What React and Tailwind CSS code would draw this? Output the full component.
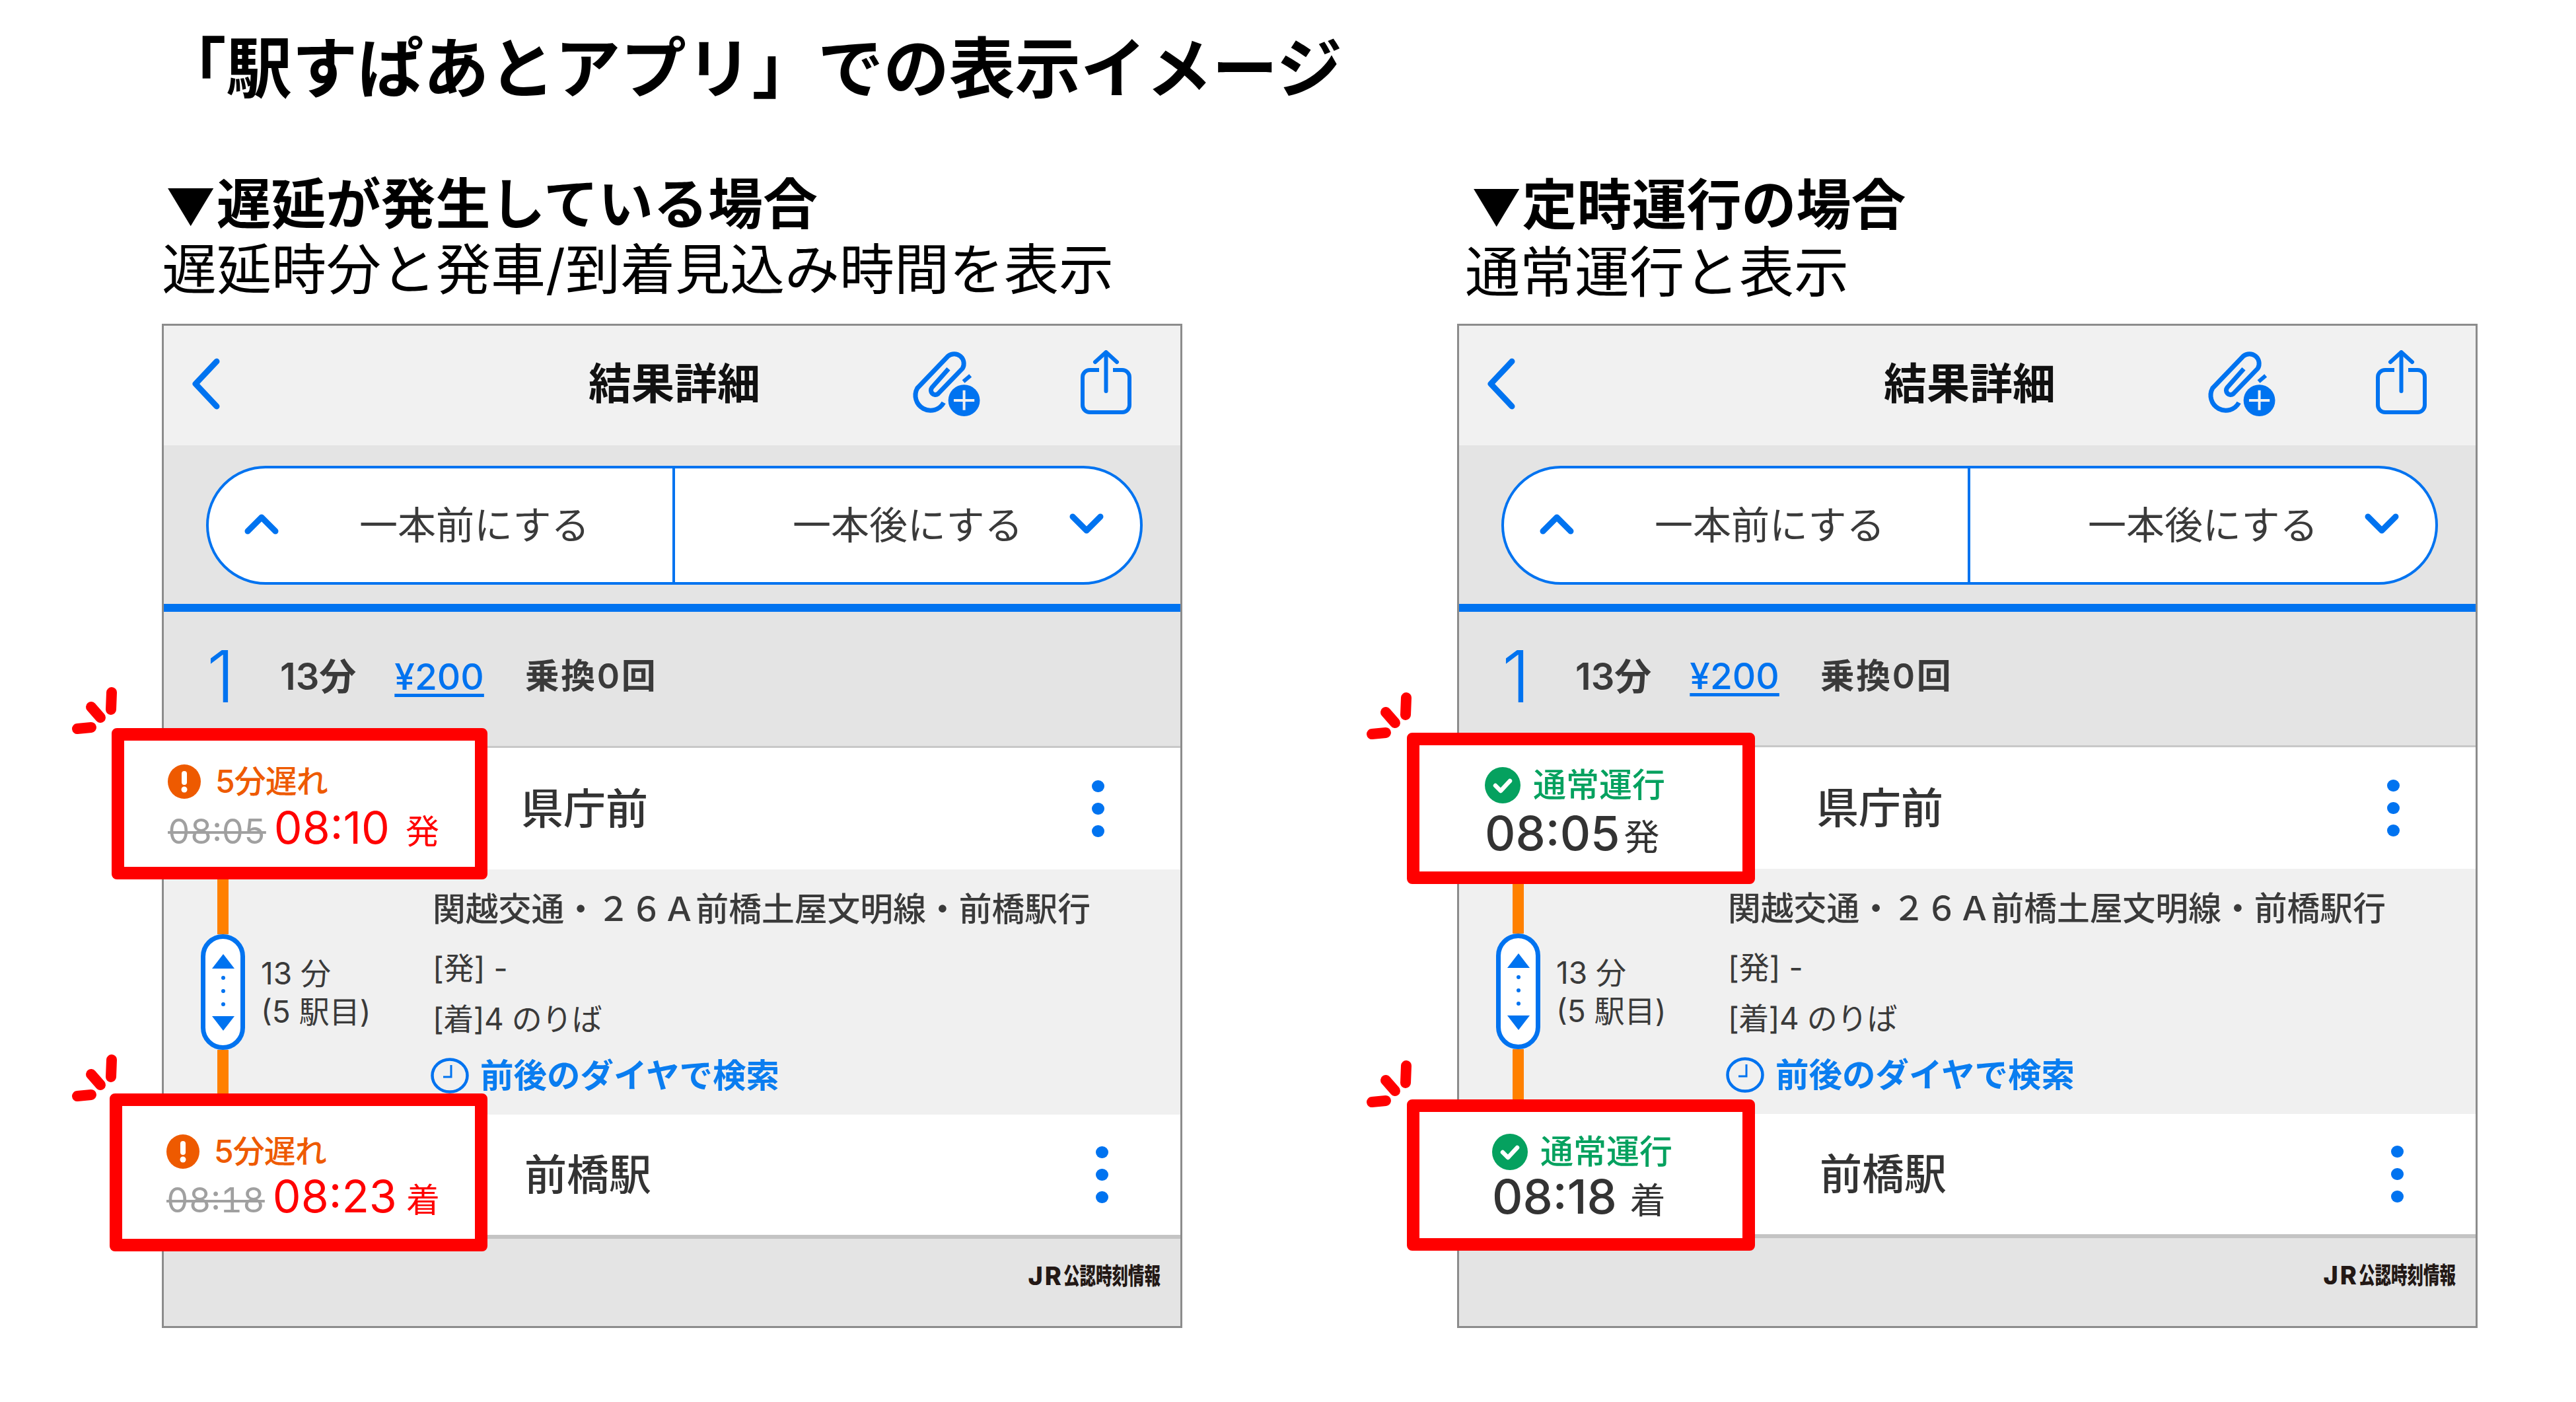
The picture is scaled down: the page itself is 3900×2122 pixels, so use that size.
import React from 'react';

const BLUE = '#0073f0';

const Burst = ({ className }) => (
  <svg className={className} width="75" height="72" viewBox="0 0 75 72" fill="none" stroke="#ff0000" strokeWidth="16" strokeLinecap="round">
    <path d="M12 63 L33 61" />
    <path d="M33 30 L47 46" />
    <path d="M64 8 L63 34" />
  </svg>
);

const AlertIcon = () => (
  <svg width="50" height="52" viewBox="0 0 50 52" className="shrink-0">
    <ellipse cx="25" cy="26" rx="25" ry="26" fill="#ee5a00" />
    <rect x="21" y="10" width="8" height="21" rx="4" fill="#fff" />
    <circle cx="25" cy="38" r="4.5" fill="#fff" />
  </svg>
);

const CheckIcon = () => (
  <svg width="54" height="55" viewBox="0 0 54 55" className="shrink-0">
    <ellipse cx="27" cy="27.5" rx="27" ry="27.5" fill="#05a15f" />
    <path d="M16 28 L24 36 L38 21" fill="none" stroke="#fff" strokeWidth="6.5" strokeLinecap="round" strokeLinejoin="round" />
  </svg>
);

const ClipIcon = () => (
  <svg width="110" height="103" viewBox="120 80 330 310" fill="none" className="shrink-0">
    <path
      d="M272 328 A66 66 0 0 1 152 262 L292 116 A44 44 0 0 1 358 172 L246 288 A20 20 0 0 1 218 260 L294 174"
      stroke={BLUE}
      strokeWidth="21"
      strokeLinecap="butt"
      strokeLinejoin="round"
    />
    <path d="M394 205 L362 232" stroke={BLUE} strokeWidth="18" />
    <circle cx="365" cy="318" r="72" fill={BLUE} />
    <path d="M318 318 H412 M365 272 V362" stroke="#f1f1f1" strokeWidth="12" />
  </svg>
);

const ShareIcon = () => (
  <svg width="77" height="97" viewBox="0 0 77 97" fill="none" stroke={BLUE} strokeWidth="6" className="shrink-0">
    <path d="M28 30 H14 A11 11 0 0 0 3 41 V83 A11 11 0 0 0 14 94 H63 A11 11 0 0 0 74 83 V41 A11 11 0 0 0 63 30 H49" />
    <path d="M38.5 5 V62" strokeLinecap="round" />
    <path d="M22 18 L38.5 3 L55 18" strokeLinecap="round" strokeLinejoin="round" />
  </svg>
);

const Chevron = ({ up }) => (
  <svg width="52" height="32" viewBox="0 0 52 32" fill="none" stroke={BLUE} strokeWidth="9" strokeLinecap="round" strokeLinejoin="round" className="shrink-0">
    <path d={up ? 'M5 27 L26 6 L47 27' : 'M5 5 L26 26 L47 5'} />
  </svg>
);

const StopsPill = () => (
  <div className="flex w-[67px] h-[175px] shrink-0 items-center justify-center rounded-full border-[7px] border-[#0073f0] bg-white">
    <svg width="36" height="116" viewBox="0 0 36 116" fill={BLUE}>
      <path d="M18 0 L35 22 H1 Z" />
      <circle cx="18" cy="36" r="3" />
      <circle cx="18" cy="56" r="3" />
      <circle cx="18" cy="76" r="3" />
      <path d="M18 116 L35 94 H1 Z" />
    </svg>
  </div>
);

const ClockIcon = () => (
  <svg width="58" height="54" viewBox="0 0 58 54" fill="none" stroke={BLUE} className="shrink-0">
    <ellipse cx="29" cy="27" rx="26.5" ry="24.5" strokeWidth="4.5" />
    <path d="M31 11 V29 H19" strokeWidth="3" />
  </svg>
);

const Dots = ({ className }) => (
  <div className={`flex flex-col gap-[16px] ${className}`}>
    <div className="w-[19px] h-[18px] rounded-full bg-[#0073f0]" />
    <div className="w-[19px] h-[18px] rounded-full bg-[#0073f0]" />
    <div className="w-[19px] h-[18px] rounded-full bg-[#0073f0]" />
  </div>
);

const DelayLine = ({ was, now, tail, nowGap, tailGap }) => (
  <div className="flex items-baseline h-[70px] leading-[70px]">
    <span className="text-[52px] text-[#a0a0a0] line-through decoration-[4px] tabular-nums">{was}</span>
    <span className={`text-[68px] text-[#ff0000] ${nowGap}`}>{now}</span>
    <span className={`text-[51px] text-[#ff0000] ${tailGap}`}>{tail}</span>
  </div>
);

const Panel = ({ boxes, summaryClass, detailClass }) => (
  <div className="relative w-[1545px] h-[1520px] border-[3px] border-[#8c8c8c] flex flex-col bg-[#e4e4e4]">
    <div className="h-[181px] bg-[#f1f1f1] flex items-center shrink-0">
      <svg width="44" height="78" viewBox="0 0 44 78" fill="none" stroke={BLUE} strokeWidth="9" strokeLinecap="round" strokeLinejoin="round" className="ml-[42px] mb-[5px] shrink-0">
        <path d="M38 5 L6 39 L38 73" />
      </svg>
      <div className="ml-[557px] w-[260px] text-[65px] leading-[80px] font-bold text-[#111] whitespace-nowrap mb-[5px]">結果詳細</div>
      <div className="ml-[227px] mb-[10px]"><ClipIcon /></div>
      <div className="ml-[148px] mb-[10px]"><ShareIcon /></div>
    </div>

    <div className="h-[240px] shrink-0 flex items-start pl-[64px] pt-[31px]">
      <div className="w-[1418px] h-[180px] rounded-[90px] border-[4px] border-[#0073f0] bg-white flex items-center overflow-hidden">
        <div className="w-[706px] h-full flex items-center border-r-[4px] border-[#0073f0]">
          <div className="ml-[54px] mt-[-5px]"><Chevron up /></div>
          <div className="ml-[122px] text-[58px] text-[#3a3a3a] whitespace-nowrap">一本前にする</div>
        </div>
        <div className="flex-1 h-full flex items-center">
          <div className="ml-[178px] text-[58px] text-[#3a3a3a] whitespace-nowrap">一本後にする</div>
          <div className="ml-[70px] mt-[-4px]"><Chevron /></div>
        </div>
      </div>
    </div>

    <div className="h-[12px] shrink-0 bg-[#0073f0]" />

    <div className={`shrink-0 flex items-center border-b-[3px] border-[#c8c8c8] pl-[65px] pb-[7px] text-[#3a3a3a] ${summaryClass}`}>
      <span className="w-[111px] text-[108px] leading-[120px] font-light text-[#0073f0]">1</span>
      <span className="text-[56px] font-semibold whitespace-nowrap">13分</span>
      <span className="ml-[58px] text-[55px] font-medium text-[#0073f0] underline decoration-[5px] underline-offset-[6px]">¥200</span>
      <span className="ml-[62px] text-[52px] font-semibold tracking-[2.5px] whitespace-nowrap">乗換0回</span>
    </div>

    <div className="h-[184px] shrink-0 bg-white flex items-center pl-[541px]">
      <div className="text-[64px] font-medium text-[#333] whitespace-nowrap">県庁前</div>
      <Dots className="ml-[672px]" />
    </div>

    <div className={`shrink-0 bg-[#f0f0f0] flex pl-[56px] text-[#3a3a3a] ${detailClass}`}>
      <div className="w-[67px] flex flex-col items-center shrink-0">
        <div className="w-[17px] flex-1 bg-[#ff8000]" />
        <StopsPill />
        <div className="w-[17px] flex-1 bg-[#ff8000]" />
      </div>
      <div className="ml-[24px] w-[260px] flex flex-col justify-center text-[46px] leading-[58px] font-normal">
        <div>13 分</div>
        <div>(5 駅目)</div>
      </div>
      <div className="flex flex-col pt-[30px]">
        <div className="h-[60px] leading-[60px] text-[49.8px] font-medium whitespace-nowrap">関越交通・２６Ａ前橋土屋文明線・前橋駅行</div>
        <div className="h-[60px] leading-[60px] mt-[29px] text-[46px] font-normal">[発] -</div>
        <div className="h-[60px] leading-[60px] mt-[17px] text-[46px] font-normal tracking-[-0.5px]">[着]4 のりば</div>
        <div className="h-[60px] mt-[26px] ml-[-3px] flex items-center">
          <ClockIcon />
          <span className="ml-[17px] text-[50.5px] font-semibold text-[#0a7df0] whitespace-nowrap">前後のダイヤで検索</span>
        </div>
      </div>
    </div>

    <div className="h-[182px] shrink-0 bg-white flex items-center pl-[546px]">
      <div className="text-[64px] font-medium text-[#333] whitespace-nowrap">前橋駅</div>
      <Dots className="ml-[673px]" />
    </div>

    <div className="h-[6px] shrink-0 bg-[#c4c4c4]" />

    <div className="flex-1 flex items-center justify-end pr-[30px] pb-[20px] text-[#231815] whitespace-nowrap">
      <span className="text-[38px] font-extrabold tracking-[3px] mr-[-63px]">JR</span>
      <span className="inline-block origin-right scale-x-[0.7] text-[35px] font-black">公認時刻情報</span>
    </div>

    {boxes}
  </div>
);

const LeftBoxes = (
  <>
    <Burst className="absolute left-[-143px] top-[547px]" />
    <div className="absolute left-[-79px] top-[609px] w-[569px] h-[229px] border-[19px] border-[#ff0000] rounded-[8px] bg-white flex flex-col pl-[66px] pt-[36px]">
      <div className="flex items-center h-[52px]">
        <AlertIcon />
        <span className="ml-[22px] text-[48px] font-medium text-[#ee5a00] tracking-[-1px] whitespace-nowrap">5分遅れ</span>
      </div>
      <div className="mt-[8px]">
        <DelayLine was="08:05" now="08:10" tail="発" nowGap="ml-[12px]" tailGap="ml-[24px]" />
      </div>
    </div>
    <Burst className="absolute left-[-143px] top-[1103px]" />
    <div className="absolute left-[-82px] top-[1162px] w-[572px] h-[239px] border-[19px] border-[#ff0000] rounded-[8px] bg-white flex flex-col pl-[67px] pt-[43px]">
      <div className="flex items-center h-[52px]">
        <AlertIcon />
        <span className="ml-[22px] text-[48px] font-medium text-[#ee5a00] tracking-[-1px] whitespace-nowrap">5分遅れ</span>
      </div>
      <div className="mt-[6px]">
        <DelayLine was="08:18" now="08:23" tail="着" nowGap="ml-[12px]" tailGap="ml-[14px]" />
      </div>
    </div>
  </>
);

const RightBoxes = (
  <>
    <Burst className="absolute left-[-144px] top-[555px]" />
    <div className="absolute left-[-79px] top-[616px] w-[527px] h-[229px] border-[19px] border-[#ff0000] rounded-[8px] bg-white flex flex-col pl-[99px] pt-[33px]">
      <div className="flex items-center h-[55px]">
        <CheckIcon />
        <span className="ml-[19px] text-[50px] font-medium text-[#05a15f] whitespace-nowrap">通常運行</span>
      </div>
      <div className="mt-[8px] flex items-baseline h-[74px] leading-[74px] text-[#333]">
        <span className="text-[72px] font-medium">08:05</span>
        <span className="ml-[6px] text-[54px]">発</span>
      </div>
    </div>
    <Burst className="absolute left-[-144px] top-[1112px]" />
    <div className="absolute left-[-79px] top-[1171px] w-[527px] h-[229px] border-[19px] border-[#ff0000] rounded-[8px] bg-white flex flex-col pl-[110px] pt-[33px]">
      <div className="flex items-center h-[55px]">
        <CheckIcon />
        <span className="ml-[19px] text-[50px] font-medium text-[#05a15f] whitespace-nowrap">通常運行</span>
      </div>
      <div className="mt-[3px] flex items-baseline h-[74px] leading-[74px] text-[#333]">
        <span className="text-[72px] font-medium">08:18</span>
        <span className="ml-[20px] text-[54px]">着</span>
      </div>
    </div>
  </>
);

export default function App() {
  return (
    <div className="w-[3900px] h-[2122px] bg-white text-black overflow-hidden font-['Inter','Noto_Sans_CJK_JP',sans-serif]">
      <h1 className="pl-[243px] pt-[44px] h-[254px] text-[99.5px] leading-[120px] font-bold whitespace-nowrap">「駅すぱあとアプリ」での表示イメージ</h1>
      <div className="flex pl-[245px] gap-[416px]">
        <div className="w-[1545px] shrink-0">
          <h2 className="h-[104px] pt-[5px] pl-[5px] text-[83px] leading-[100px] font-bold whitespace-nowrap"><span className="text-[74px]">▼</span>遅延が発生している場合</h2>
          <p className="h-[132px] text-[83px] leading-[100px] whitespace-nowrap">遅延時分と発車/到着見込み時間を表示</p>
          <Panel boxes={LeftBoxes} summaryClass="h-[206px]" detailClass="h-[371px]" />
        </div>
        <div className="w-[1545px] shrink-0">
          <h2 className="h-[108px] pt-[6px] pl-[21px] text-[83px] leading-[100px] font-bold whitespace-nowrap"><span className="text-[74px]">▼</span>定時運行の場合</h2>
          <p className="h-[128px] pl-[12px] text-[83px] leading-[100px] whitespace-nowrap">通常運行と表示</p>
          <Panel boxes={RightBoxes} summaryClass="h-[205px]" detailClass="h-[371px]" />
        </div>
      </div>
    </div>
  );
}
